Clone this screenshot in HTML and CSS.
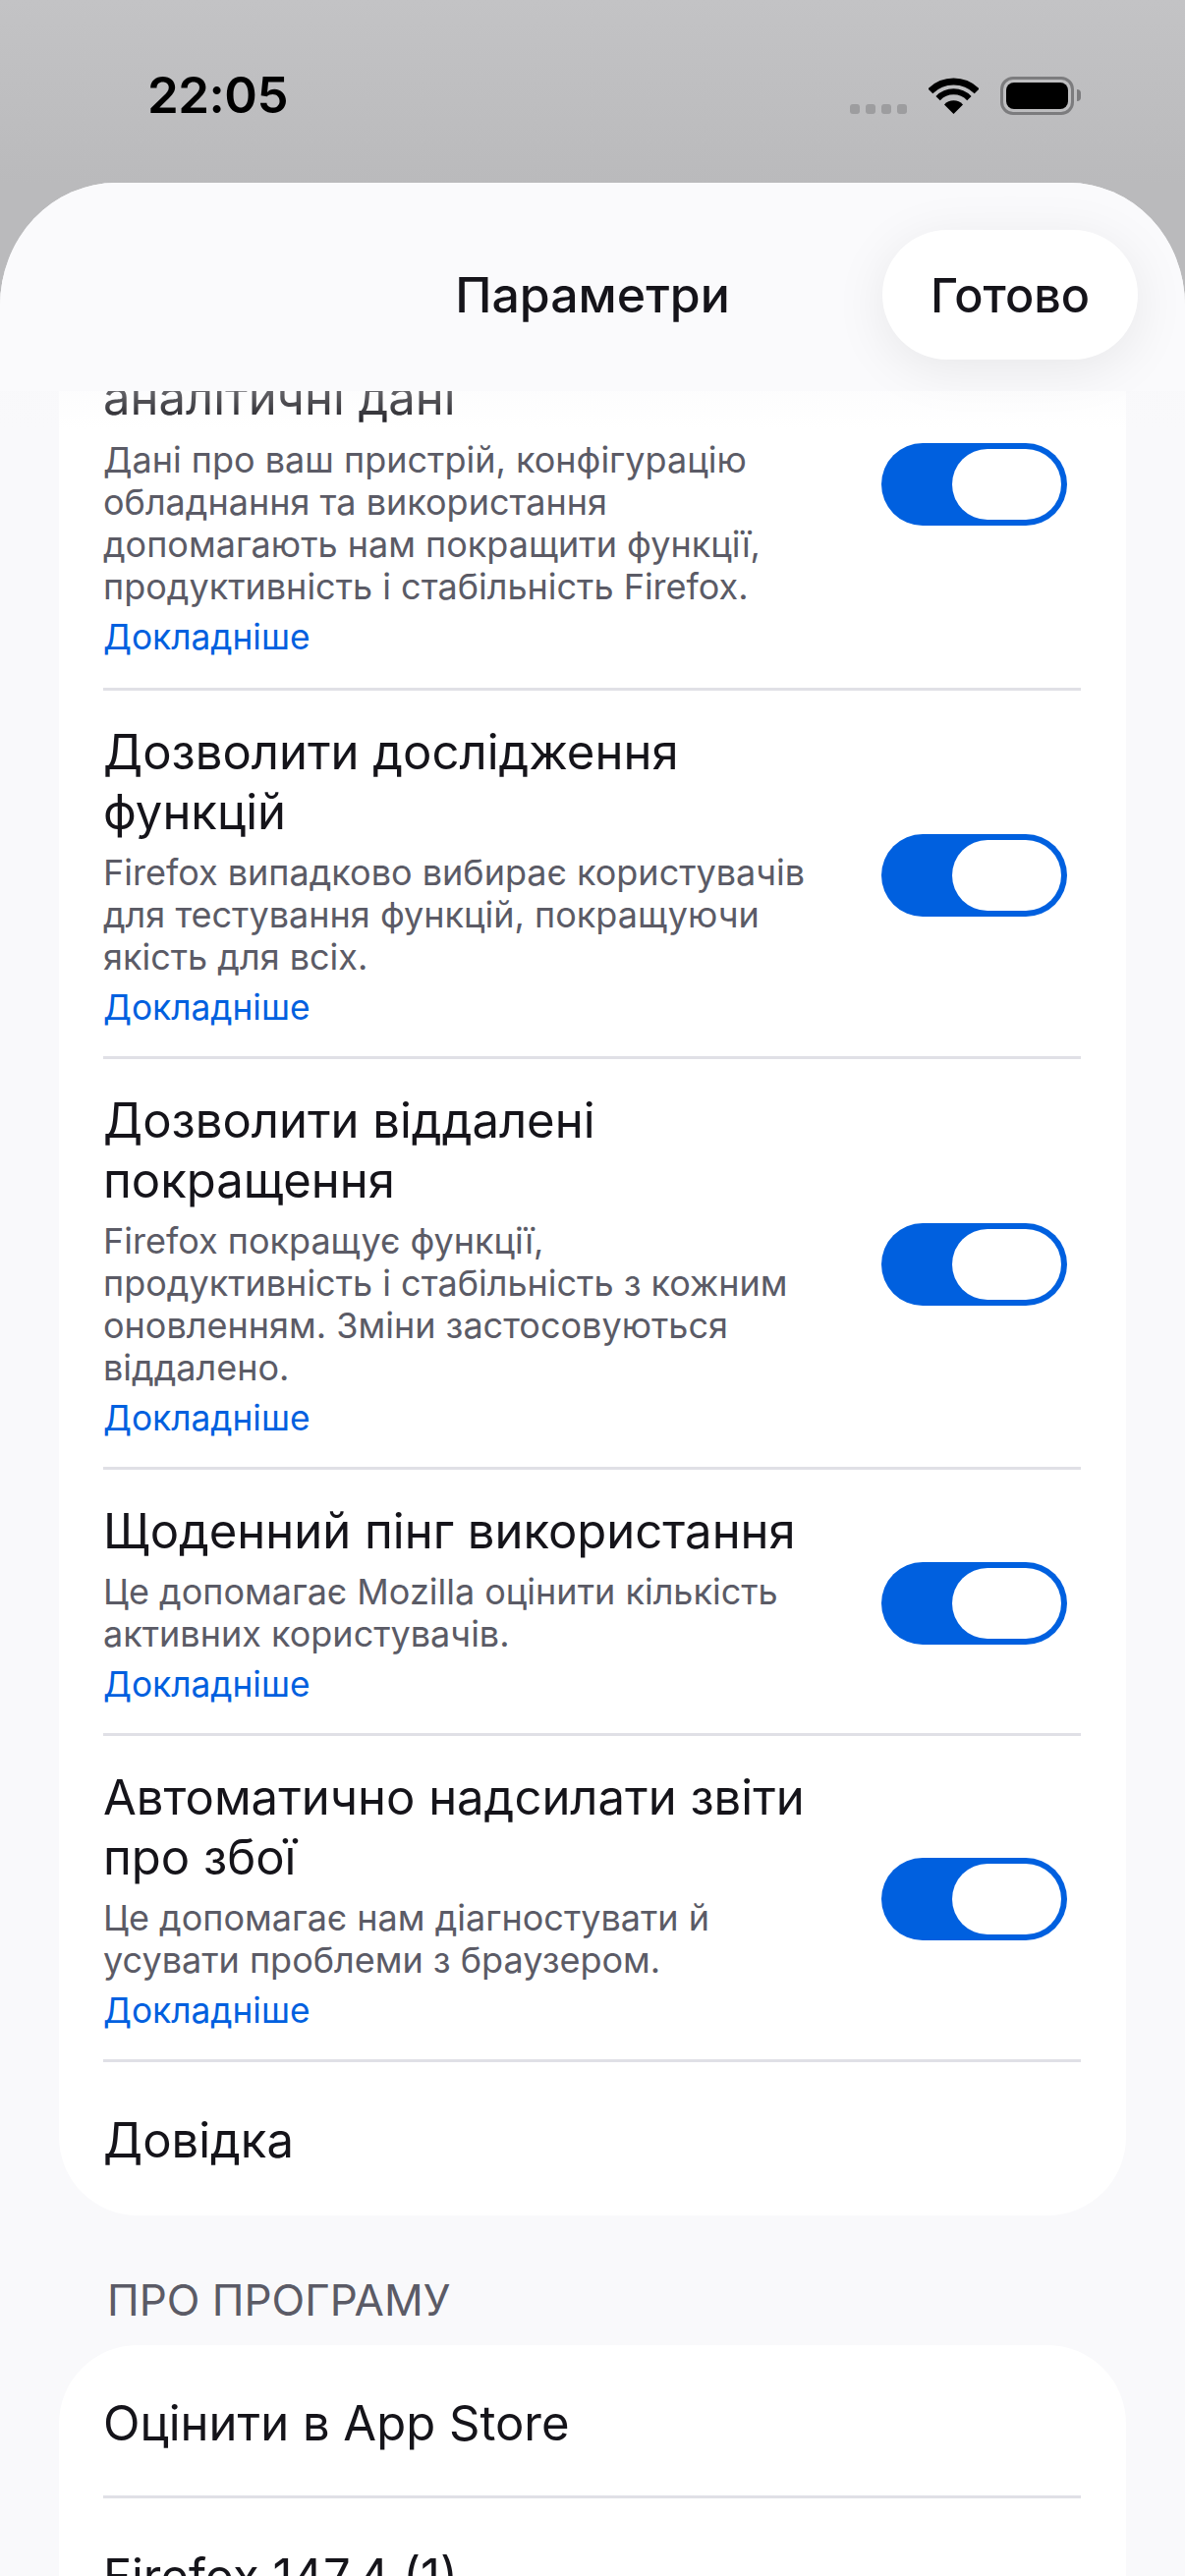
FILE: index.html
```html
<!DOCTYPE html>
<html lang="uk">
<head>
    <meta charset="UTF-8">
    <meta name="viewport" content="width=device-width, initial-scale=1.0">
    <title>Параметри</title>
    <link rel="stylesheet" href="styles.css">
</head>
<body>

    <div class="status-bar">
        <span class="clock">22:05</span>
        <div class="status-icons">
            <div class="signal"><i></i><i></i><i></i><i></i></div>
            <svg class="wifi" width="51" height="37" viewBox="0 0 51 37">
                <path d="M1.8 13.8A33.5 33.5 0 0 1 49.2 13.8" fill="none" stroke="#000" stroke-width="7"/>
                <path d="M9.6 21.1A22 22 0 0 1 41.4 21.1" fill="none" stroke="#000" stroke-width="6"/>
                <path d="M25.5 37L16 27.5A13 13 0 0 1 35 27.5Z" fill="#000"/>
            </svg>
            <div class="battery"><div class="battery-fill"></div></div>
            <div class="battery-tip"></div>
        </div>
    </div>

    <div class="sheet">
        <div class="nav">
            <h1 class="nav-title">Параметри</h1>
            <button class="done">Готово</button>
        </div>

        <div class="card">
            <div class="row row-first">
                <div class="row-text">
                    <div class="title">аналітичні дані</div>
                    <div class="sub">Дані про ваш пристрій, конфігурацію<br>обладнання та використання<br>допомагають нам покращити функції,<br>продуктивність і стабільність Firefox.</div>
                    <a class="more">Докладніше</a>
                </div>
                <div class="toggle"><div class="knob"></div></div>
            </div>
            <div class="row">
                <div class="row-text">
                    <div class="title">Дозволити дослідження<br>функцій</div>
                    <div class="sub">Firefox випадково вибирає користувачів<br>для тестування функцій, покращуючи<br>якість для всіх.</div>
                    <a class="more">Докладніше</a>
                </div>
                <div class="toggle"><div class="knob"></div></div>
            </div>
            <div class="row">
                <div class="row-text">
                    <div class="title">Дозволити віддалені<br>покращення</div>
                    <div class="sub">Firefox покращує функції,<br>продуктивність і стабільність з кожним<br>оновленням. Зміни застосовуються<br>віддалено.</div>
                    <a class="more">Докладніше</a>
                </div>
                <div class="toggle"><div class="knob"></div></div>
            </div>
            <div class="row">
                <div class="row-text">
                    <div class="title">Щоденний пінг використання</div>
                    <div class="sub">Це допомагає Mozilla оцінити кількість<br>активних користувачів.</div>
                    <a class="more">Докладніше</a>
                </div>
                <div class="toggle"><div class="knob"></div></div>
            </div>
            <div class="row">
                <div class="row-text">
                    <div class="title">Автоматично надсилати звіти<br>про збої</div>
                    <div class="sub">Це допомагає нам діагностувати й<br>усувати проблеми з браузером.</div>
                    <a class="more">Докладніше</a>
                </div>
                <div class="toggle"><div class="knob"></div></div>
            </div>
            <div class="row row-plain">
                <div class="title">Довідка</div>
            </div>
        </div>

        <div class="section-label">ПРО ПРОГРАМУ</div>

        <div class="card">
            <div class="row row-plain">
                <div class="title">Оцінити в App Store</div>
            </div>
            <div class="row row-plain">
                <div class="title">Firefox 147.4 (1)</div>
            </div>
        </div>
    </div>

</body>
</html>
```

FILE: styles.css
```css
html, body {
    margin: 0;
    height: 2622px;
    overflow: hidden;
}

body {
    font-family: Inter, "Noto Sans", sans-serif;
    background: linear-gradient(#c3c3c5, #bababc 186px);
    color: #15141a;
}

.status-bar {
    height: 186px;
    box-sizing: border-box;
    padding: 70px 106px 0 150px;
    display: flex;
    justify-content: space-between;
    align-items: flex-start;
}

.clock {
    font-size: 51px;
    font-weight: 600;
    line-height: 54px;
    color: #000;
    letter-spacing: -0.5px;
}

.status-icons {
    display: flex;
    align-items: flex-start;
    padding-top: 8px;
}

.signal {
    display: flex;
    gap: 6px;
    margin-top: 28px;
    margin-right: 22px;
}

.signal i {
    width: 10px;
    height: 10px;
    border-radius: 3px;
    background-color: #9d9d9f;
}

.wifi {
    margin-top: 1px;
    margin-right: 22px;
}

.battery {
    width: 75px;
    height: 39px;
    box-sizing: border-box;
    border: 3px solid #7c7c7e;
    border-radius: 13px;
    padding: 3px;
}

.battery-fill {
    height: 100%;
    background-color: #000;
    border-radius: 8px;
}

.battery-tip {
    width: 4px;
    height: 12px;
    margin-top: 13px;
    margin-left: 3px;
    background-color: #7c7c7e;
    border-radius: 0 6px 6px 0;
}

.sheet {
    position: relative;
    height: 2436px;
    box-sizing: border-box;
    padding: 97px 60px 0;
    background-color: #f9f9fb;
    border-radius: 118px 118px 0 0 / 125px 125px 0 0;
    overflow: hidden;
}

/* stays on top of the scrolled list */
.nav {
    position: absolute;
    top: 0;
    left: 0;
    right: 0;
    height: 212px;
    background-color: #fafafc;
    z-index: 2;
}

.nav::after {
    content: "";
    position: absolute;
    top: 212px;
    left: 0;
    right: 0;
    height: 40px;
    background: linear-gradient(rgba(248, 248, 250, 0.35), rgba(255, 255, 255, 0));
}

.nav-title {
    margin: 0;
    font-size: 50px;
    font-weight: 500;
    line-height: 60px;
    text-align: center;
    padding-top: 84px;
}

.done {
    position: absolute;
    top: 48px;
    right: 48px;
    width: 260px;
    height: 132px;
    border: none;
    border-radius: 66px;
    background-color: #fff;
    color: #15141a;
    font-family: inherit;
    font-size: 48.5px;
    font-weight: 500;
    box-shadow: 0 10px 54px rgba(0, 0, 0, 0.08);
}

.card {
    background-color: #fff;
    border-radius: 80px;
    padding: 0 46px 0 45px;
}

.row {
    display: flex;
    justify-content: space-between;
    align-items: center;
    padding: 29px 14px 28px 0;
    border-bottom: 3px solid #e0e0e6;
}

.row:last-child {
    border-bottom: none;
}

.row-text {
    padding-top: 3px;
}

/* title's first line has scrolled away under the nav */
.row-first {
    padding-top: 31px;
    padding-bottom: 30px;
}

.row-first .row-text {
    padding-top: 60px;
}

.row-first .sub {
    margin-top: 12px;
}

.row-plain {
    padding: 49px 0 43px;
}

.row-plain:last-child {
    padding-bottom: 46px;
}

.title {
    font-size: 49px;
    line-height: 61px;
}

.sub {
    margin-top: 10px;
    font-size: 36px;
    line-height: 43px;
    color: #5b5b66;
}

.more {
    display: block;
    margin-top: 8px;
    font-size: 35.3px;
    line-height: 43px;
    color: #0060df;
}

.toggle {
    flex-shrink: 0;
    width: 189px;
    height: 84px;
    margin-top: 2px;
    box-sizing: border-box;
    padding: 6px;
    border-radius: 42px;
    background-color: #0060df;
    display: flex;
    justify-content: flex-end;
}

.knob {
    width: 111px;
    height: 72px;
    border-radius: 36px;
    background-color: #fff;
}

.section-label {
    margin: 65px 0 25px 49px;
    font-size: 44px;
    line-height: 42px;
    color: #5b5b66;
}
```
